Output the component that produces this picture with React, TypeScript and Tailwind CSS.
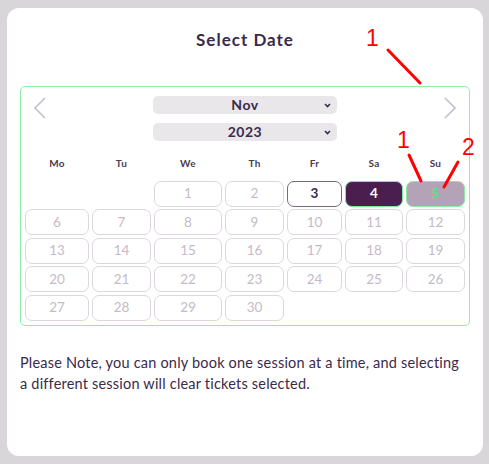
import React from "react";

const FONT = { fontFamily: "Lato, 'Noto Sans', sans-serif" };

const COLS = "grid-cols-[64px_59px_68px_59px_55px_58px_59px]";
const DAYS = ["Mo", "Tu", "We", "Th", "Fr", "Sa", "Su"];

type Cell = { n: number; kind: "off" | "today" | "picked" | "hover" } | null;

function buildCells(): Cell[] {
  const cells: Cell[] = [null, null];
  for (let n = 1; n <= 30; n++) {
    let kind: "off" | "today" | "picked" | "hover" = "off";
    if (n === 3) kind = "today";
    if (n === 4) kind = "picked";
    if (n === 5) kind = "hover";
    cells.push({ n, kind });
  }
  return cells;
}

function Chevron({ dir }: { dir: "left" | "right" }) {
  return (
    <svg width="12" height="22" viewBox="0 0 12 22" fill="none">
      <polyline
        points={dir === "left" ? "11,1 1,11 11,21" : "1,1 11,11 1,21"}
        stroke="#c8bdd0"
        strokeWidth="1.6"
      />
    </svg>
  );
}

function Picker({ value, options }: { value: string; options: string[] }) {
  return (
    <div className="relative w-[184px]">
      <select
        defaultValue={value}
        className="block h-[18px] w-full appearance-none rounded-[5px] bg-[#e9e7ea] text-center text-[14px] leading-[18px] font-bold tracking-[0.5px] text-[#3b2a4a] outline-none [text-align-last:center]"
        style={FONT}
      >
        {options.map((o) => (
          <option key={o}>{o}</option>
        ))}
      </select>
      <svg
        className="pointer-events-none absolute right-[6px] top-[7px]"
        width="7"
        height="5"
        viewBox="0 0 7 5"
        fill="none"
      >
        <polyline points="1,1 3.5,3.5 6,1" stroke="#3b2a4a" strokeWidth="1.6" />
      </svg>
    </div>
  );
}

function DayCell({ cell }: { cell: Cell }) {
  if (!cell) return <div />;
  const base = "flex h-[26px] items-center justify-center rounded-[7px] border text-[13.5px]";
  if (cell.kind === "today")
    return <div className={`${base} border-[#7a6a80] font-bold text-[#3b2a4a]`}>{cell.n}</div>;
  if (cell.kind === "picked")
    return <div className={`${base} border-[#7ee89a] bg-[#4b1e50] font-bold text-white`}>{cell.n}</div>;
  if (cell.kind === "hover")
    return <div className={`${base} border-[#8ee8a0] bg-[#b4a3b7] font-bold text-[#55e585]`}>{cell.n}</div>;
  return <div className={`${base} border-[#ddd6df] text-[#c6bac9]`}>{cell.n}</div>;
}

export default function App() {
  const cells = buildCells();

  return (
    <div className="relative h-[464px] w-[489px] bg-[#d9d6d9] pl-[7px] pt-[8px]" style={FONT}>
      <div className="flex h-[448px] w-[476px] flex-col rounded-[12px] bg-white px-[13px]">
        <h1 className="mt-[20px] text-center text-[17px] leading-[24px] font-bold tracking-[1px] text-[#3b2a4a]">
          Select Date
        </h1>

        <div className="mt-[34px] h-[240px] w-[450px] rounded-[5px] border border-[#8ef0a6] px-[4px]">
          <div className="flex items-start justify-between px-[9px] pt-[10px]">
            <Chevron dir="left" />
            <div className="-mt-[1px] flex flex-col gap-[9px]">
              <Picker value="Nov" options={["Oct", "Nov", "Dec"]} />
              <Picker value="2023" options={["2023", "2024"]} />
            </div>
            <Chevron dir="right" />
          </div>

          <div className={`mt-[15px] grid ${COLS} gap-x-[3px] gap-y-[2.5px]`}>
            {DAYS.map((d) => (
              <div key={d} className="mb-[8px] h-[14px] text-center text-[10px] font-bold leading-[14px] tracking-[0.3px] text-[#4a3a55]">
                {d}
              </div>
            ))}
            {cells.map((c, i) => (
              <DayCell key={i} cell={c} />
            ))}
          </div>
        </div>

        <p className="mt-[26px] w-[445px] text-[14.5px] leading-[21px] tracking-[0.2px] text-[#3b2a4a]">
          Please Note, you can only book one session at a time, and selecting a different session will
          clear tickets selected.
        </p>
      </div>

      {/* red annotation marks drawn over the screenshot */}
      <span className="absolute left-[366px] top-[27px] text-[23px] leading-none text-[#ff0000]" style={{ fontFamily: "'Liberation Sans', sans-serif" }}>
        1
      </span>
      <span className="absolute left-[397px] top-[129px] text-[23px] leading-none text-[#ff0000]" style={{ fontFamily: "'Liberation Sans', sans-serif" }}>
        1
      </span>
      <span className="absolute left-[462px] top-[136px] text-[23px] leading-none text-[#ff0000]" style={{ fontFamily: "'Liberation Sans', sans-serif" }}>
        2
      </span>
      <svg className="pointer-events-none absolute left-0 top-0" width="489" height="464">
        <g stroke="#ff0000" strokeWidth="3" strokeLinecap="round">
          <line x1="388" y1="50" x2="420" y2="83" />
          <line x1="409" y1="155" x2="421" y2="181" />
          <line x1="458" y1="162" x2="444" y2="187" />
        </g>
      </svg>
    </div>
  );
}
